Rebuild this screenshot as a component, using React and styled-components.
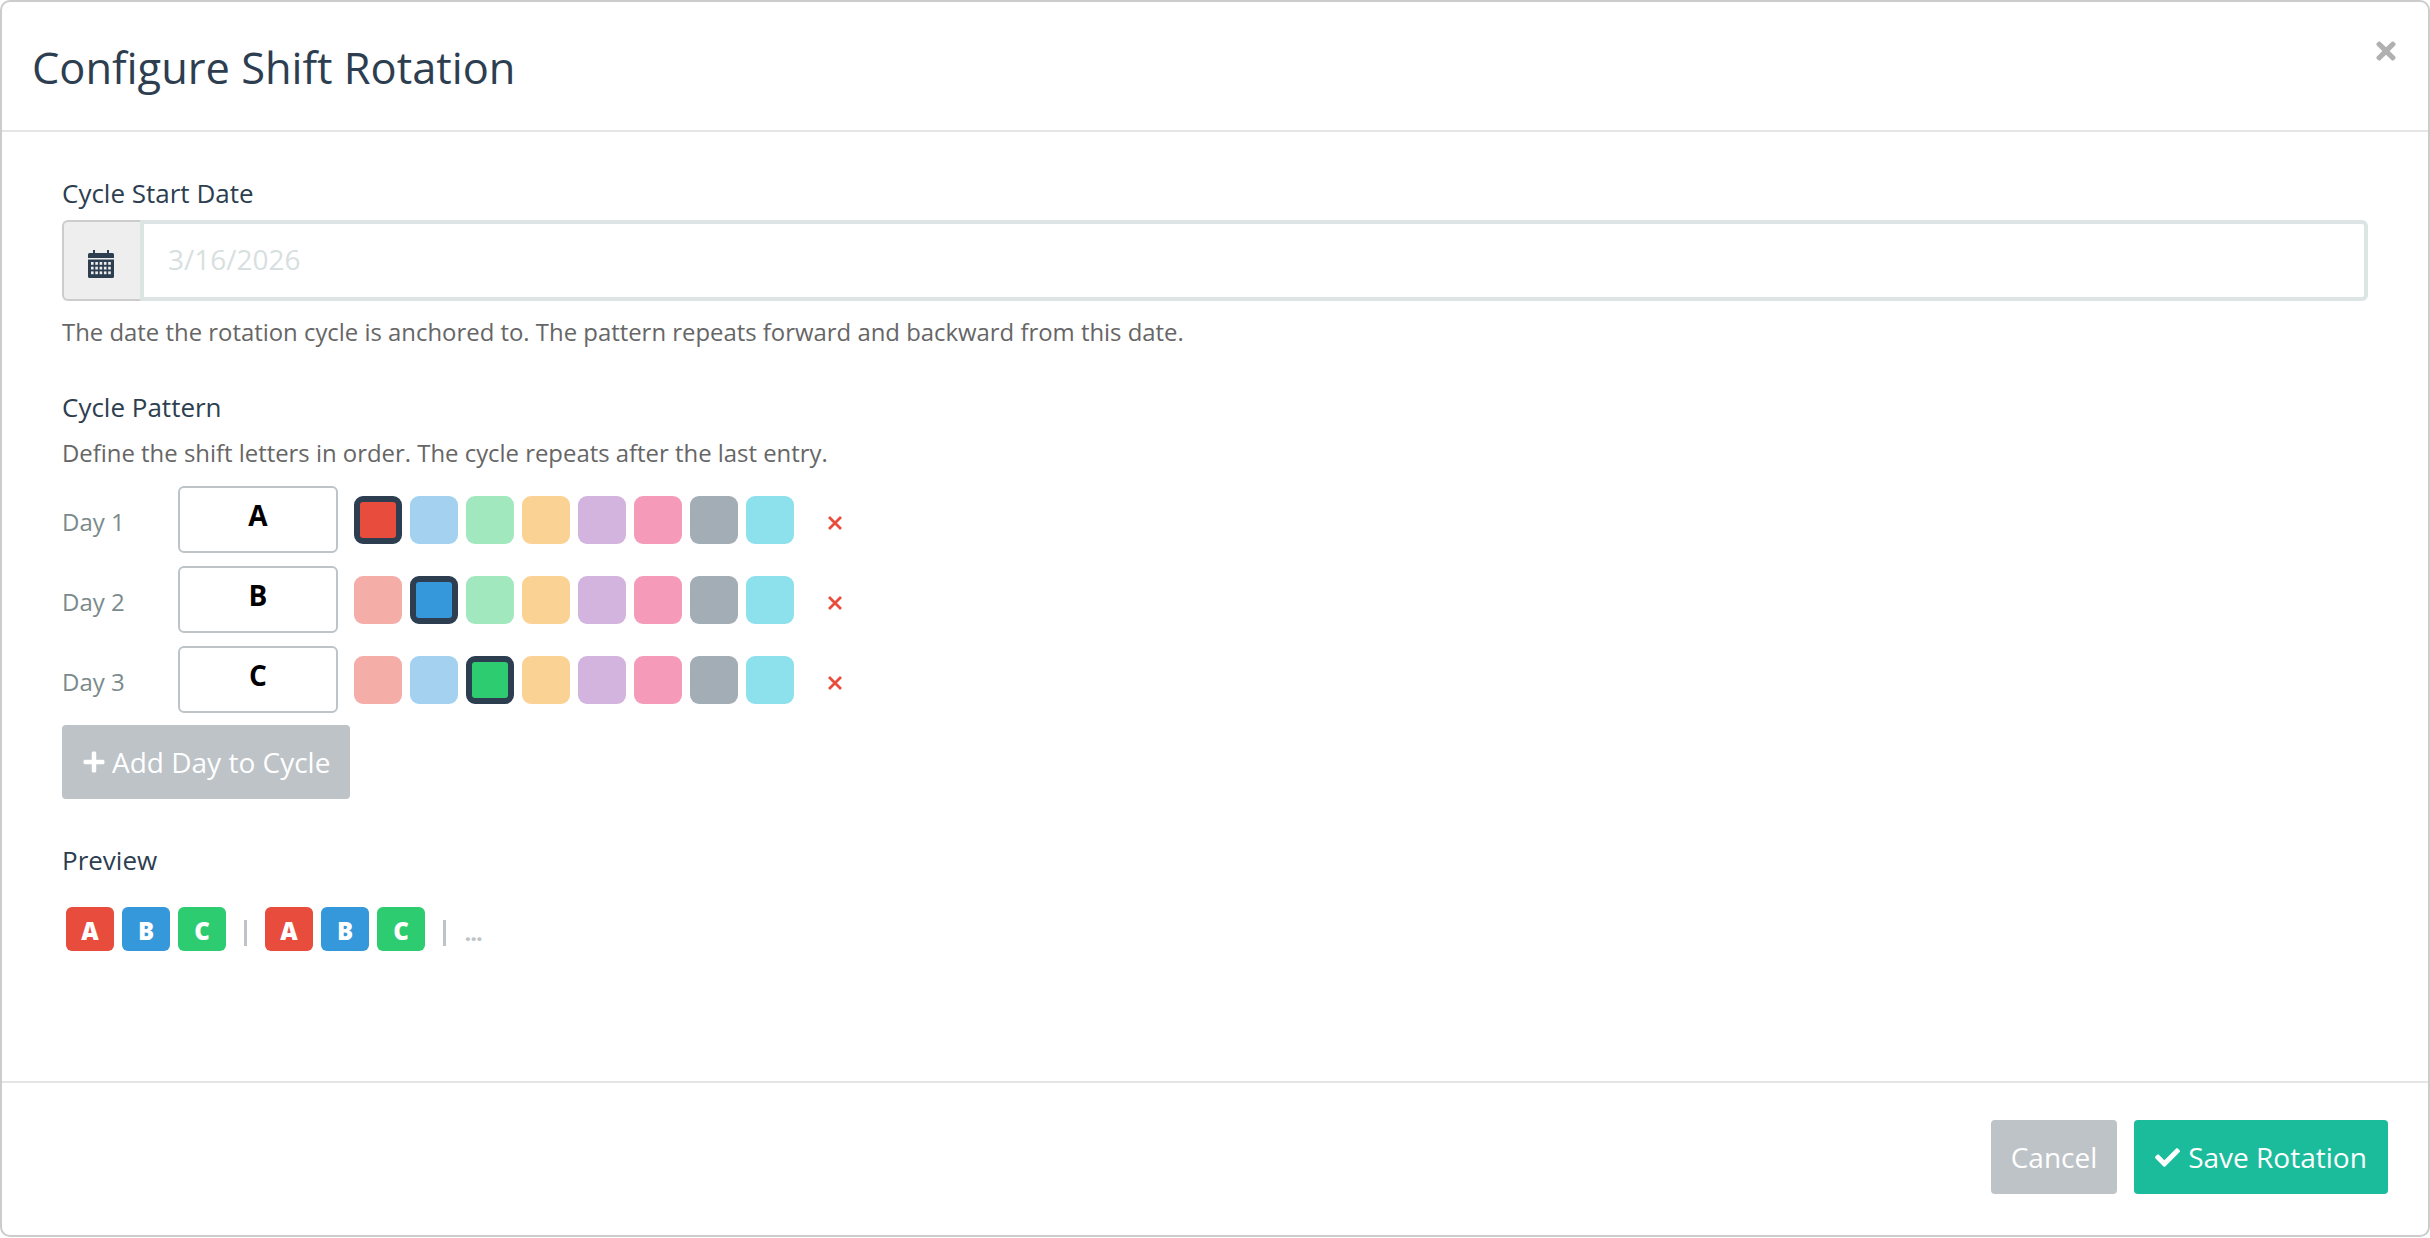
import React from "react";
import styled, { createGlobalStyle } from "styled-components";
import { FaCheck, FaPlus, FaTimes } from "react-icons/fa";

const GlobalStyle = createGlobalStyle`
    html, body {
        margin: 0;
        padding: 0;
        background: #fff;
    }
    body {
        font-family: "Open Sans", "Liberation Sans", sans-serif;
        color: #2c3e50;
    }
    * {
        box-sizing: border-box;
    }
`;

const swatches = ["#e74c3c", "#3498db", "#2ecc71", "#f39c12", "#9b59b6", "#e91e63", "#34495e", "#00bcd4"];

const days = [
    { name: "Day 1", letter: "A", color: 0 },
    { name: "Day 2", letter: "B", color: 1 },
    { name: "Day 3", letter: "C", color: 2 },
];

function CalendarIcon() {
    const dots = [];
    for (let row = 0; row < 3; row++) {
        for (let col = 0; col < 5; col++) {
            dots.push(<rect key={row + "-" + col} x={3 + col * 4.3} y={12 + row * 4.7} width="2.6" height="2.8" fill="#eee" />);
        }
    }
    return (
        <svg width="26" height="28" viewBox="0 0 26 28">
            <path d="M5 0h2v3h12V0h2v3h3.500A1.500 1.500 0 0 1 26 4.500V8H0V4.500A1.500 1.500 0 0 1 1.500 3H5z" fill="#2c3e50" />
            <path d="M0 9.500h26v17A1.500 1.500 0 0 1 24.500 28h-23A1.500 1.500 0 0 1 0 26.500z" fill="#2c3e50" />
            {dots}
        </svg>
    );
}

function DeleteIcon() {
    return (
        <svg width="16" height="16" viewBox="0 0 16 16">
            <path d="M2 2L14 14M14 2L2 14" stroke="#e74c3c" strokeWidth="2.8" fill="none" />
        </svg>
    );
}

export default function App() {
    return (
        <>
            <GlobalStyle />
            <Modal>
                <Header>
                    <Title>Configure Shift Rotation</Title>
                    <CloseButton><FaTimes /></CloseButton>
                </Header>
                <Body>
                    <Label>Cycle Start Date</Label>
                    <InputGroup>
                        <Addon><CalendarIcon /></Addon>
                        <DateInput placeholder="3/16/2026" readOnly />
                    </InputGroup>
                    <Help>The date the rotation cycle is anchored to. The pattern repeats forward and backward from this date.</Help>

                    <PatternLabel>Cycle Pattern</PatternLabel>
                    <PatternHelp>Define the shift letters in order. The cycle repeats after the last entry.</PatternHelp>
                    <Rows>
                        {days.map((day) => (
                            <Row key={day.name}>
                                <DayName>{day.name}</DayName>
                                <LetterInput defaultValue={day.letter} />
                                <Swatches>
                                    {swatches.map((color, index) => (
                                        <Swatch key={color} $color={color} $selected={index === day.color} />
                                    ))}
                                </Swatches>
                                <DeleteButton><DeleteIcon /></DeleteButton>
                            </Row>
                        ))}
                    </Rows>
                    <AddButton><FaPlus />Add Day to Cycle</AddButton>

                    <PreviewLabel>Preview</PreviewLabel>
                    <Preview>
                        <Chip $color={swatches[0]}>A</Chip>
                        <Chip $color={swatches[1]}>B</Chip>
                        <Chip $color={swatches[2]}>C</Chip>
                        <Divider />
                        <Chip $color={swatches[0]}>A</Chip>
                        <Chip $color={swatches[1]}>B</Chip>
                        <Chip $color={swatches[2]}>C</Chip>
                        <Divider />
                        <More>...</More>
                    </Preview>
                </Body>
                <Footer>
                    <CancelButton>Cancel</CancelButton>
                    <SaveButton><FaCheck />Save Rotation</SaveButton>
                </Footer>
            </Modal>
        </>
    );
}

const Modal = styled.div`
    position: relative;
    width: 2430px;
    height: 1237px;
    display: flex;
    flex-direction: column;
    background: #fff;
    border: 2px solid #ccc;
    border-radius: 10px;
`;

const Header = styled.div`
    height: 130px;
    flex: none;
    display: flex;
    align-items: center;
    padding: 2px 30px 0;
    border-bottom: 2px solid #e5e5e5;
`;

const Title = styled.h4`
    margin: 0;
    font-size: 43.400px;
    font-weight: 400;
    color: #2c3e50;
`;

const CloseButton = styled.button`
    position: absolute;
    top: 35px;
    right: 28px;
    display: flex;
    padding: 0;
    border: none;
    background: none;
    color: #b0b0b0;
    font-size: 28px;
    line-height: 1;
    cursor: pointer;
`;

const Body = styled.div`
    flex: 1;
    padding: 45px 60px 0;
`;

const Label = styled.div`
    font-size: 26px;
    line-height: 32px;
    color: #2c3e50;
`;

const InputGroup = styled.div`
    display: flex;
    width: 2306px;
    height: 81px;
    margin-top: 11px;
`;

const Addon = styled.div`
    width: 78px;
    flex: none;
    display: flex;
    align-items: center;
    justify-content: center;
    padding: 6px 3px 0 0;
    background: #eee;
    border: 2px solid #ccc;
    border-right: none;
    border-radius: 6px 0 0 6px;
`;

const DateInput = styled.input`
    flex: 1;
    min-width: 0;
    padding: 0 24px 4px;
    border: 4px solid #dce4e4;
    border-radius: 0 6px 6px 0;
    outline: none;
    font-family: inherit;
    font-size: 28px;
    color: #2c3e50;
    &::placeholder {
        color: #d8dfdf;
        opacity: 1;
    }
`;

const Help = styled.div`
    margin-top: 15px;
    font-size: 23.900px;
    line-height: 32px;
    color: #666;
`;

const PatternLabel = styled(Label)`
    margin-top: 43px;
`;

const PatternHelp = styled(Help)`
    margin-top: 14px;
`;

const Rows = styled.div`
    display: flex;
    flex-direction: column;
    gap: 13px;
    margin-top: 17px;
`;

const Row = styled.div`
    display: flex;
    align-items: center;
    height: 67px;
`;

const DayName = styled.div`
    width: 116px;
    padding-top: 4px;
    font-size: 24px;
    color: #7b8a8b;
`;

const LetterInput = styled.input`
    width: 160px;
    height: 67px;
    padding: 0 0 10px;
    border: 2px solid #bdc3c7;
    border-radius: 6px;
    outline: none;
    text-align: center;
    font-family: inherit;
    font-size: 28px;
    font-weight: 700;
    color: #000;
`;

const Swatches = styled.div`
    display: flex;
    gap: 8px;
    margin-left: 16px;
`;

const Swatch = styled.div`
    width: 48px;
    height: 48px;
    border-radius: 9px;
    background: ${(props) => props.$color};
    opacity: ${(props) => (props.$selected ? 1 : 0.45)};
    border: ${(props) => (props.$selected ? "6px solid #2c3e50" : "none")};
`;

const DeleteButton = styled.button`
    display: flex;
    margin-left: 33px;
    padding: 6px 0 0;
    border: none;
    background: none;
`;

const AddButton = styled.button`
    display: flex;
    align-items: center;
    gap: 6px;
    height: 74px;
    margin-top: 12px;
    padding: 0 20px;
    border: none;
    border-radius: 4px;
    background: #bdc3c7;
    color: #fff;
    font-family: inherit;
    font-size: 28px;
    svg {
        font-size: 24px;
    }
`;

const PreviewLabel = styled(Label)`
    margin-top: 45px;
`;

const Preview = styled.div`
    display: flex;
    align-items: center;
    margin-top: 31px;
    padding-left: 4px;
`;

const Chip = styled.div`
    width: 48px;
    height: 44px;
    margin-right: 8px;
    display: flex;
    align-items: center;
    justify-content: center;
    padding-top: 3px;
    border-radius: 6px;
    background: ${(props) => props.$color};
    color: #fff;
    font-size: 24px;
    font-weight: 800;
`;

const Divider = styled.div`
    width: 3px;
    height: 26px;
    margin: 8px 18px 0 10px;
    background: #bdc3c7;
`;

const More = styled.div`
    margin-left: 1px;
    padding-top: 8px;
    font-size: 20px;
    font-weight: 800;
    color: #bdc3c7;
`;

const Footer = styled.div`
    height: 154px;
    flex: none;
    display: flex;
    justify-content: flex-end;
    align-items: flex-start;
    gap: 17px;
    padding: 37px 40px 0 0;
    border-top: 2px solid #e5e5e5;
`;

const CancelButton = styled.button`
    height: 74px;
    width: 126px;
    border: none;
    border-radius: 4px;
    background: #bdc3c7;
    color: #fff;
    font-family: inherit;
    font-size: 28px;
`;

const SaveButton = styled.button`
    height: 74px;
    width: 254px;
    display: flex;
    align-items: center;
    justify-content: center;
    gap: 8px;
    border: none;
    border-radius: 4px;
    background: #1abc9c;
    color: #fff;
    font-family: inherit;
    font-size: 28px;
    svg {
        font-size: 25px;
    }
`;
